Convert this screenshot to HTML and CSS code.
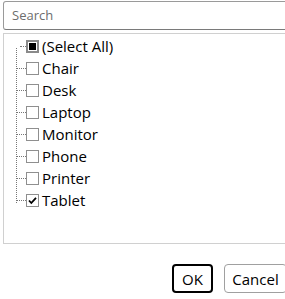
FILE: index.html
```html
<!DOCTYPE html>
<html>
<head>
<meta charset="utf-8">
<link rel="stylesheet" href="styles.css">
</head>
<body>
<div class="panel">
  <div class="search">Search</div>
  <div class="tree">
    <div class="rows">
      <div class="row first"><span class="cb partial"></span><span class="label">(Select All)</span></div>
      <div class="row"><span class="cb"></span><span class="label">Chair</span></div>
      <div class="row"><span class="cb"></span><span class="label">Desk</span></div>
      <div class="row"><span class="cb"></span><span class="label">Laptop</span></div>
      <div class="row"><span class="cb"></span><span class="label">Monitor</span></div>
      <div class="row"><span class="cb"></span><span class="label">Phone</span></div>
      <div class="row"><span class="cb"></span><span class="label">Printer</span></div>
      <div class="row last"><span class="cb checked"><svg width="11" height="11" viewBox="0 0 11 11"><path d="M2 5.5 L4.3 8 L9 2.8" fill="none" stroke="#000" stroke-width="1.8"/></svg></span><span class="label">Tablet</span></div>
    </div>
  </div>
  <div class="buttons">
    <div class="btn ok">OK</div>
    <div class="btn cancel">Cancel</div>
  </div>
</div>
</body>
</html>
```

FILE: styles.css
```css
html, body {
  margin: 0;
  padding: 0;
  background: #fff;
  overflow: hidden;
}
.panel {
  width: 300px;
  padding: 1px 0 0 3px;
  font-family: "Open Sans", "Noto Sans", sans-serif;
  color: #000;
}
.search {
  box-sizing: border-box;
  height: 29px;
  border: 1px solid #9a9a9a;
  border-bottom-color: #7a7a7a;
  border-radius: 3px;
  padding: 0 0 0 8px;
  font-size: 13px;
  line-height: 27px;
  color: #6d6d6d;
}
.tree {
  box-sizing: border-box;
  margin-top: 3px;
  height: 211px;
  border: 1px solid #d0d0d0;
}
.rows {
  position: relative;
  padding-top: 2px;
}
.rows::before {
  content: "";
  position: absolute;
  left: 12px;
  top: 14px;
  height: 155px;
  border-left: 1px dotted #777;
}
.row {
  position: relative;
  display: flex;
  align-items: flex-start;
  height: 22px;
}
.row::before {
  content: "";
  position: absolute;
  left: 12px;
  top: 10px;
  width: 10px;
  border-top: 1px dotted #777;
}
.row.first::before {
  left: 16px;
  width: 6px;
}
.cb {
  box-sizing: border-box;
  width: 13px;
  height: 13px;
  margin: 4px 0 0 22px;
  border: 1px solid #8f8f8f;
  background: #fff;
  display: flex;
  align-items: center;
  justify-content: center;
  flex-shrink: 0;
}
.cb.partial {
  border: 2px solid #8a8a8a;
  padding: 1px;
}
.cb.partial::after {
  content: "";
  width: 7px;
  height: 7px;
  background: #000;
}
.cb svg {
  display: block;
}
.label {
  margin-left: 3px;
  font-size: 15px;
  line-height: 21px;
  white-space: nowrap;
}
.buttons {
  display: flex;
  gap: 11px;
  margin-top: 20px;
  padding-left: 169px;
}
.btn {
  box-sizing: border-box;
  height: 29px;
  display: flex;
  align-items: center;
  justify-content: center;
  font-size: 15px;
  border-radius: 4px;
  background: #fff;
}
.ok {
  width: 41px;
  border: 2px solid #000;
}
.cancel {
  width: 63px;
  border: 1px solid #a0a0a0;
}
```
